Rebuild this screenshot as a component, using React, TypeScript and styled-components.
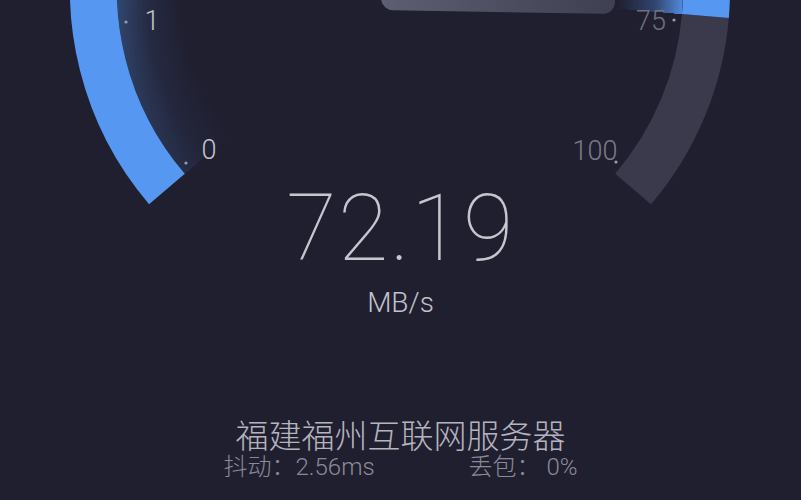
import React from 'react';
import styled, { createGlobalStyle } from 'styled-components';

const GlobalStyle = createGlobalStyle`
  html, body {
    margin: 0;
    padding: 0;
    background: #201f30;
  }
`;

const Screen = styled.div`
  width: 801px;
  height: 500px;
  overflow: hidden;
  background: #201f30;
  display: flex;
  flex-direction: column;
  align-items: center;
  font-family: Roboto, 'Liberation Sans', sans-serif;
`;

const Gauge = styled.div`
  position: relative;
  width: 801px;
  height: 183px;
  flex-shrink: 0;
`;

const Glow = styled.div`
  position: absolute;
  left: 117px;
  top: -293px;
  width: 566px;
  height: 566px;
  border-radius: 50%;
  background: conic-gradient(
    from 229.5deg,
    rgba(86, 150, 240, 0.12) 0deg,
    rgba(86, 150, 240, 0.35) 40deg,
    rgba(86, 150, 240, 0.9) 225.4deg,
    transparent 225.4deg
  );
  mask-image: radial-gradient(circle closest-side, transparent 77%, rgba(0, 0, 0, 0.35) 90%, #000 100%);
  -webkit-mask-image: radial-gradient(circle closest-side, transparent 77%, rgba(0, 0, 0, 0.35) 90%, #000 100%);
`;

const Dial = styled.svg`
  position: absolute;
  left: 0;
  top: 0;
  overflow: visible;
`;

const Speed = styled.div`
  font-size: 92px;
  line-height: 92px;
  font-weight: 100;
  color: #c6c6ce;
  letter-spacing: 1.5px;
`;

const Unit = styled.div`
  margin-top: 14px;
  font-size: 28px;
  line-height: 28px;
  font-weight: 300;
  color: #c2c2ca;
`;

const Server = styled.div`
  margin-top: 99px;
  font-family: 'Noto Sans CJK SC', sans-serif;
  font-size: 33px;
  line-height: 36px;
  font-weight: 300;
  color: #b4b4be;
`;

const Stats = styled.div`
  margin-top: 2px;
  width: 354px;
  display: flex;
  justify-content: space-between;
  font-family: Roboto, 'Noto Sans CJK SC', sans-serif;
  font-size: 24px;
  line-height: 26px;
  font-weight: 300;
  color: #8a8a97;
`;

const Stat = styled.span`
  white-space: pre;
`;

const CX = 400;
const CY = -10;
const MID = 306.5;

const pt = (r: number, deg: number) => {
  const a = (deg * Math.PI) / 180;
  return [CX + r * Math.cos(a), CY + r * Math.sin(a)];
};

const arc = (r: number, from: number, to: number) => {
  const [x1, y1] = pt(r, from);
  const [x2, y2] = pt(r, to);
  const large = to - from > 180 ? 1 : 0;
  return `M ${x1} ${y1} A ${r} ${r} 0 ${large} 1 ${x2} ${y2}`;
};

const ticks = [
  { label: '1', x: 152, y: 30, dot: [126, 22], color: '#c4c4ce' },
  { label: '0', x: 209, y: 159, dot: [186, 163], color: '#c4c4ce' },
  { label: '75', x: 651, y: 30, dot: [674, 20], color: '#6f6f80' },
  { label: '100', x: 595, y: 160, dot: [616, 162], color: '#7a7a89' },
];

export default function App() {
  return (
    <>
      <GlobalStyle />
      <Screen>
        <Gauge>
          <Glow />
          <Dial width={801} height={215} viewBox='0 0 801 215'>
            <defs>
              <linearGradient id='needle' x1='0' y1='0' x2='1' y2='0'>
                <stop offset='0' stopColor='#5e5e72' />
                <stop offset='1' stopColor='#3f3f52' />
              </linearGradient>
            </defs>
            <path d={arc(MID, 4.86, 40.5)} fill='none' stroke='#3b3a4c' strokeWidth={47} />
            <path d={arc(MID, 139.5, 364.86)} fill='none' stroke='#5597f1' strokeWidth={47} />
            <rect
              x={381}
              y={-40}
              width={234}
              height={52}
              rx={12}
              fill='url(#needle)'
              transform='rotate(1 500 0)'
            />
            {ticks.map((t) => (
              <g key={t.label}>
                <circle cx={t.dot[0]} cy={t.dot[1]} r={1.6} fill='#9c9caa' />
                <text
                  x={t.x}
                  y={t.y}
                  textAnchor='middle'
                  fontFamily='Roboto, sans-serif'
                  fontWeight={300}
                  fontSize={27}
                  fill={t.color}
                >
                  {t.label}
                </text>
              </g>
            ))}
          </Dial>
        </Gauge>
        <Speed>72.19</Speed>
        <Unit>MB/s</Unit>
        <Server>福建福州互联网服务器</Server>
        <Stats>
          <Stat>抖动：2.56ms</Stat>
          <Stat>丢包： 0%</Stat>
        </Stats>
      </Screen>
    </>
  );
}
